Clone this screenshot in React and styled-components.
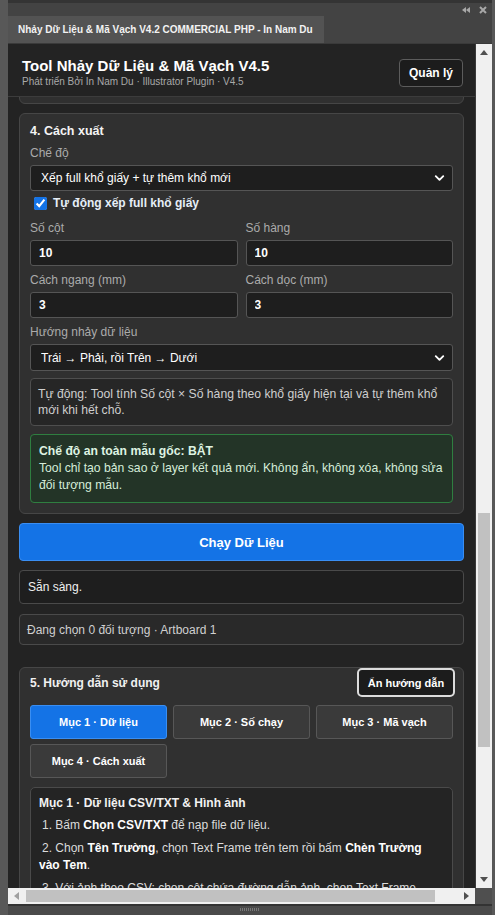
import React from "react";
import styled, { createGlobalStyle } from "styled-components";
import { ChevronDown } from "lucide-react";

const GlobalStyle = createGlobalStyle`
  html, body {
    margin: 0;
    padding: 0;
    background: #565656;
    overflow: hidden;
  }
  body {
    font-family: "Liberation Sans", Arial, sans-serif;
    color: #e8e8e8;
  }
  * { box-sizing: border-box; }
`;

/* ---------- host window chrome ---------- */

const Frame = styled.div`
  width: 495px;
  height: 915px;
  display: flex;
  flex-direction: column;
  background: #585858;
  padding: 0 3px 0 8px;
`;

const TitleStrip = styled.div`
  height: 16px;
  flex: none;
  background: #434343;
  border-top: 3px solid #343434;
  display: flex;
  align-items: center;
  justify-content: flex-end;
  gap: 9px;
  padding-right: 5px;
`;

const TabBar = styled.div`
  height: 28px;
  flex: none;
  display: flex;
  background: #434343;
  border-bottom: 1px solid #3a3a3a;
`;

const Tab = styled.div`
  width: 316px;
  display: flex;
  align-items: center;
  padding-left: 10px;
  background: #535353;
  color: #f2f2f2;
  font-size: 10px;
  font-weight: 700;
  white-space: nowrap;
`;

const Workspace = styled.div`
  flex: 1;
  min-height: 0;
  display: grid;
  grid-template-columns: 1fr 17px;
  grid-template-rows: 1fr 16px;
`;

const BottomBar = styled.div`
  height: 11px;
  flex: none;
  background: #4a4a4a;
  border-top: 2px solid #333;
  display: flex;
  justify-content: center;
  padding-top: 2px;
`;

const Grip = styled.div`
  width: 20px;
  height: 3px;
  background: repeating-linear-gradient(90deg, #777 0 1px, transparent 1px 2px);
`;

/* ---------- scrollbars ---------- */

const VScroll = styled.div`
  background: #f0f0f0;
  display: flex;
  flex-direction: column;
  border-left: 1px solid #3a3a3a;
`;

const HScroll = styled.div`
  background: #f0f0f0;
  display: flex;
`;

const ScrollArrow = styled.div`
  flex: none;
  width: ${(p) => (p.$horizontal ? "17px" : "auto")};
  height: ${(p) => (p.$horizontal ? "auto" : "17px")};
  display: flex;
  align-items: center;
  justify-content: center;
`;

const Track = styled.div`
  flex: 1;
  display: flex;
  flex-direction: ${(p) => (p.$horizontal ? "row" : "column")};
  padding: ${(p) => (p.$horizontal ? "2px 0" : "0 2px")};
`;

const Thumb = styled.div`
  background: #c1c1c1;
  flex: none;
`;

const Corner = styled.div`
  background: #4f4f4f;
`;

/* ---------- plugin panel ---------- */

const Viewport = styled.div`
  background: #232323;
  display: flex;
  flex-direction: column;
  min-height: 0;
  overflow: hidden;
`;

const Header = styled.header`
  flex: none;
  height: 53px;
  display: flex;
  align-items: flex-start;
  justify-content: space-between;
  padding: 13px 12px 0 14px;
  border-bottom: 1px solid #3c3c3c;
  background: #232323;
`;

const Brand = styled.div`
  display: flex;
  flex-direction: column;
`;

const BrandTitle = styled.div`
  font-size: 15px;
  line-height: 18px;
  font-weight: 700;
  color: #fff;
`;

const BrandSub = styled.div`
  font-size: 10px;
  line-height: 13px;
  color: #a9a9a9;
`;

const GhostButton = styled.button`
  font-family: inherit;
  font-weight: 700;
  font-size: ${(p) => (p.$strong ? "11px" : "12px")};
  color: #fff;
  background: #1c1c1c;
  border: ${(p) => (p.$strong ? "2px solid #dcdcdc" : "1px solid #5c5c5c")};
  border-radius: ${(p) => (p.$strong ? "5px" : "4px")};
  height: ${(p) => (p.$strong ? "29px" : "28px")};
  width: ${(p) => (p.$strong ? "98px" : "auto")};
  padding: 0 ${(p) => (p.$strong ? "0" : "9px")};
  margin-top: ${(p) => p.$top || 0}px;
  margin-right: ${(p) => (p.$strong ? "-2px" : "0")};
`;

const Clip = styled.div`
  flex: 1;
  min-height: 0;
  overflow: hidden;
`;

const Body = styled.div`
  display: flex;
  flex-direction: column;
  padding: 0 11px 0 11px;
`;

const Card = styled.section`
  background: #303030;
  border: 1px solid #464646;
  border-radius: 6px;
  padding: ${(p) => (p.$flushTop ? "0 10px 10px" : "9px 10px 10px")};
  margin-top: ${(p) => p.$mt || 0}px;
  display: flex;
  flex-direction: column;
`;

const CardTail = styled(Card)`
  height: 40px;
  margin-top: -33px;
`;

const CardTitle = styled.h3`
  margin: 0;
  font-size: 12.5px;
  line-height: 16px;
  font-weight: 700;
  color: #f4f4f4;
`;

const Label = styled.label`
  display: block;
  font-size: 12px;
  line-height: 15px;
  color: #ababab;
  margin-top: ${(p) => p.$mt || 0}px;
  margin-bottom: 4px;
`;

const SelectWrap = styled.div`
  position: relative;
  height: ${(p) => p.$h || 26}px;
`;

const Select = styled.select`
  appearance: none;
  width: 100%;
  height: 100%;
  font-family: inherit;
  font-size: 12px;
  color: #fff;
  background: #1e1e1e;
  border: 1px solid #555;
  border-radius: 3px;
  padding: 0 24px 0 10px;
  outline: none;
`;

const Chevron = styled(ChevronDown)`
  position: absolute;
  right: 6px;
  top: 50%;
  transform: translateY(-50%);
  pointer-events: none;
  color: #fff;
`;

const CheckRow = styled.label`
  display: flex;
  align-items: center;
  gap: 6px;
  height: 16px;
  margin-top: 4px;
  padding-left: 4px;
  font-size: 12px;
  font-weight: 700;
  color: #e6eef7;
`;

const Check = styled.input`
  width: 13px;
  height: 13px;
  margin: 0;
  accent-color: #1473e6;
`;

const Pair = styled.div`
  display: grid;
  grid-template-columns: 1fr 1fr;
  column-gap: 8px;
`;

const Field = styled.div`
  display: flex;
  flex-direction: column;
`;

const Input = styled.input`
  height: 26px;
  width: 100%;
  font-family: inherit;
  font-size: 12px;
  font-weight: 700;
  color: #fff;
  background: #1e1e1e;
  border: 1px solid #555;
  border-radius: 3px;
  padding: 0 8px;
  outline: none;
`;

const Note = styled.div`
  margin-top: ${(p) => p.$mt || 0}px;
  border: 1px solid ${(p) => (p.$tone === "safe" ? "#2f7e40" : "#4e4e4e")};
  background: ${(p) => (p.$tone === "safe" ? "#233427" : "#262626")};
  border-radius: 4px;
  padding: ${(p) => (p.$tone === "safe" ? "8px 8px" : "7px 7px")};
  font-size: 12.2px;
  line-height: ${(p) => (p.$tone === "safe" ? "17px" : "16px")};
  color: ${(p) => (p.$tone === "safe" ? "#d5ecd9" : "#cfcfcf")};
`;

const NoteTitle = styled.div`
  font-weight: 700;
  color: #def3e2;
`;

const RunButton = styled.button`
  margin-top: 9px;
  height: 38px;
  width: 100%;
  font-family: inherit;
  font-size: 13px;
  font-weight: 700;
  color: #fff;
  background: #1473e6;
  border: 1px solid #3a8ef2;
  border-radius: 4px;
`;

const StatusBox = styled.div`
  margin-top: ${(p) => p.$mt || 0}px;
  height: ${(p) => p.$h}px;
  display: flex;
  align-items: center;
  padding-left: ${(p) => (p.$muted ? 7 : 8)}px;
  background: ${(p) => (p.$muted ? "#292929" : "#1e1e1e")};
  border: 1px solid #4a4a4a;
  border-radius: 4px;
  font-size: 12px;
  color: ${(p) => (p.$muted ? "#d0d0d0" : "#f0f0f0")};
`;

const GuideHead = styled.div`
  height: 29px;
  display: flex;
  align-items: center;
  justify-content: space-between;
`;

const GuideTitle = styled.div`
  font-size: 12px;
  font-weight: 700;
  color: #f0f0f0;
`;

const TabGrid = styled.div`
  margin-top: 8px;
  display: grid;
  grid-template-columns: repeat(3, 1fr);
  column-gap: 6px;
  row-gap: 5px;
`;

const GuideTab = styled.button`
  height: 34px;
  font-family: inherit;
  font-size: 11px;
  font-weight: 700;
  color: #fff;
  background: ${(p) => (p.$active ? "#1473e6" : "#3a3a3a")};
  border: 1px solid ${(p) => (p.$active ? "#3a8ef2" : "#575757")};
  border-radius: 3px;
`;

const GuideBox = styled.div`
  margin-top: 9px;
  background: #242424;
  border: 1px solid #4a4a4a;
  border-radius: 5px;
  padding: 8px 12px 8px 8px;
`;

const GuideHeading = styled.div`
  font-size: 12px;
  line-height: 15px;
  font-weight: 700;
  color: #f2f2f2;
`;

const Steps = styled.ol`
  list-style: none;
  margin: 6px 0 0;
  padding: 0;
  display: flex;
  flex-direction: column;
  gap: 6px;
`;

const Step = styled.li`
  font-size: 12px;
  line-height: 17px;
  color: #dcdcdc;
  text-indent: 3px;
  b { color: #fff; }
`;

/* ---------- small drawn glyphs ---------- */

const Tri = ({ dir, color = "#505050" }) => {
  const pts = {
    up: "0,5 4,0 8,5",
    down: "0,0 8,0 4,5",
    left: "5,0 5,8 0,4",
    right: "0,0 0,8 5,4",
  }[dir];
  const vertical = dir === "up" || dir === "down";
  return (
    <svg width={vertical ? 8 : 5} height={vertical ? 5 : 8} viewBox={vertical ? "0 0 8 5" : "0 0 5 8"}>
      <polygon points={pts} fill={color} />
    </svg>
  );
};

const CollapseIcon = () => (
  <svg width="8" height="6" viewBox="0 0 8 6">
    <polygon points="4,0 4,6 0,3" fill="#a8a8a8" />
    <polygon points="8,0 8,6 4,3" fill="#a8a8a8" />
  </svg>
);

const CloseIcon = () => (
  <svg width="8" height="8" viewBox="0 0 8 8">
    <path d="M1 1 L7 7 M7 1 L1 7" stroke="#a8a8a8" strokeWidth="2" />
  </svg>
);

const tabs = ["Mục 1 · Dữ liệu", "Mục 2 · Số chạy", "Mục 3 · Mã vạch", "Mục 4 · Cách xuất"];

// scroll state of the panel body (pixels)
const vThumb = { offset: 452, size: 234 };
const hThumb = { offset: 1, size: 409 };

export default function App() {
  return (
    <>
      <GlobalStyle />
      <Frame>
        <TitleStrip>
          <CollapseIcon />
          <CloseIcon />
        </TitleStrip>
        <TabBar>
          <Tab>Nhảy Dữ Liệu &amp; Mã Vạch V4.2 COMMERCIAL PHP - In Nam Du</Tab>
        </TabBar>

        <Workspace>
          <Viewport>
            <Header>
              <Brand>
                <BrandTitle>Tool Nhảy Dữ Liệu &amp; Mã Vạch V4.5</BrandTitle>
                <BrandSub>Phát triển Bởi In Nam Du · Illustrator Plugin · V4.5</BrandSub>
              </Brand>
              <GhostButton $top={2}>Quản lý</GhostButton>
            </Header>

            <Clip>
              <Body>
                <CardTail />

                <Card $mt={9}>
                  <CardTitle>4. Cách xuất</CardTitle>

                  <Label $mt={7}>Chế độ</Label>
                  <SelectWrap>
                    <Select defaultValue="full">
                      <option value="full">Xếp full khổ giấy + tự thêm khổ mới</option>
                    </Select>
                    <Chevron size={15} strokeWidth={3} />
                  </SelectWrap>

                  <CheckRow>
                    <Check type="checkbox" defaultChecked />
                    Tự động xếp full khổ giấy
                  </CheckRow>

                  <Pair>
                    <Field>
                      <Label $mt={10}>Số cột</Label>
                      <Input defaultValue="10" />
                    </Field>
                    <Field>
                      <Label $mt={10}>Số hàng</Label>
                      <Input defaultValue="10" />
                    </Field>
                    <Field>
                      <Label $mt={7}>Cách ngang (mm)</Label>
                      <Input defaultValue="3" />
                    </Field>
                    <Field>
                      <Label $mt={7}>Cách dọc (mm)</Label>
                      <Input defaultValue="3" />
                    </Field>
                  </Pair>

                  <Label $mt={7}>Hướng nhảy dữ liệu</Label>
                  <SelectWrap $h={27}>
                    <Select defaultValue="lr">
                      <option value="lr">Trái → Phải, rồi Trên → Dưới</option>
                    </Select>
                    <Chevron size={15} strokeWidth={3} />
                  </SelectWrap>

                  <Note $mt={7}>
                    Tự động: Tool tính Số cột × Số hàng theo khổ giấy hiện tại và tự thêm khổ mới khi hết chỗ.
                  </Note>

                  <Note $mt={8} $tone="safe">
                    <NoteTitle>Chế độ an toàn mẫu gốc: BẬT</NoteTitle>
                    Tool chỉ tạo bản sao ở layer kết quả mới. Không ẩn, không xóa, không sửa đối tượng mẫu.
                  </Note>
                </Card>

                <RunButton>Chạy Dữ Liệu</RunButton>

                <StatusBox $mt={9} $h={34}>Sẵn sàng.</StatusBox>
                <StatusBox $mt={10} $h={31} $muted>
                  Đang chọn 0 đối tượng · Artboard 1
                </StatusBox>

                <Card $mt={22} $flushTop>
                  <GuideHead>
                    <GuideTitle>5. Hướng dẫn sử dụng</GuideTitle>
                    <GhostButton $strong>Ẩn hướng dẫn</GhostButton>
                  </GuideHead>

                  <TabGrid>
                    {tabs.map((t, i) => (
                      <GuideTab key={t} $active={i === 0}>
                        {t}
                      </GuideTab>
                    ))}
                  </TabGrid>

                  <GuideBox>
                    <GuideHeading>Mục 1 · Dữ liệu CSV/TXT &amp; Hình ảnh</GuideHeading>
                    <Steps>
                      <Step>
                        1. Bấm <b>Chọn CSV/TXT</b> để nạp file dữ liệu.
                      </Step>
                      <Step>
                        2. Chọn <b>Tên Trường</b>, chọn Text Frame trên tem rồi bấm <b>Chèn Trường vào Tem</b>.
                      </Step>
                      <Step>
                        3. Với ảnh theo CSV: chọn cột chứa đường dẫn ảnh, chọn Text Frame hoặc khung ảnh mẫu rồi bấm <b>Gán Ảnh</b>.
                      </Step>
                    </Steps>
                  </GuideBox>
                </Card>
              </Body>
            </Clip>
          </Viewport>

          <VScroll>
            <ScrollArrow>
              <Tri dir="up" />
            </ScrollArrow>
            <Track>
              <Thumb style={{ marginTop: vThumb.offset, height: vThumb.size }} />
            </Track>
            <ScrollArrow>
              <Tri dir="down" />
            </ScrollArrow>
          </VScroll>

          <HScroll>
            <ScrollArrow $horizontal>
              <Tri dir="left" color="#a0a0a0" />
            </ScrollArrow>
            <Track $horizontal>
              <Thumb style={{ marginLeft: hThumb.offset, width: hThumb.size }} />
            </Track>
            <ScrollArrow $horizontal>
              <Tri dir="right" />
            </ScrollArrow>
          </HScroll>
          <Corner />
        </Workspace>

        <BottomBar>
          <Grip />
        </BottomBar>
      </Frame>
    </>
  );
}
